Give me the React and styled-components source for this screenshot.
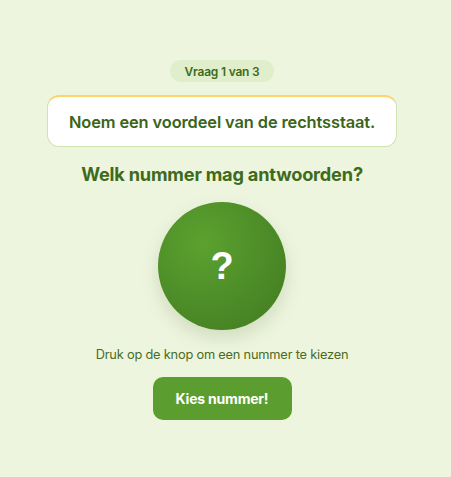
import { createGlobalStyle } from "styled-components";
import styled from "styled-components";

const GlobalStyle = createGlobalStyle`
  html, body {
    margin: 0;
    padding: 0;
    background: #eef5df;
  }

  body {
    font-family: Inter, "Open Sans", sans-serif;
  }
`;

const Page = styled.main`
  min-height: 477px;
  box-sizing: border-box;
  padding: 60px 54px 0 47px;
  display: flex;
  flex-direction: column;
  align-items: center;
`;

const Badge = styled.div`
  height: 22px;
  padding: 0 14px;
  border-radius: 11px;
  background: #e0eecb;
  color: #3f6a1e;
  font-size: 12px;
  font-weight: 600;
  letter-spacing: -0.2px;
  display: flex;
  align-items: center;
`;

const QuestionCard = styled.div`
  margin-top: 13px;
  width: 100%;
  height: 52px;
  box-sizing: border-box;
  background: #fff;
  border: 1px solid #cfe3b3;
  border-top: 2px solid #fcd46a;
  border-radius: 12px;
  display: flex;
  align-items: center;
  justify-content: center;
  color: #3a6418;
  font-size: 16.4px;
  font-weight: 600;
  letter-spacing: -0.1px;
`;

const Heading = styled.h2`
  margin: 16px 0 0;
  color: #3d6b1b;
  font-size: 18.2px;
  font-weight: 700;
  letter-spacing: -0.2px;
  line-height: 22px;
`;

const NumberBall = styled.div`
  margin-top: 17px;
  width: 128px;
  height: 128px;
  border-radius: 50%;
  background: radial-gradient(circle at 35% 32%, #5ba22f 0%, #4e8d28 50%, #417a20 100%);
  box-shadow: 0 8px 18px rgba(70, 110, 40, 0.18);
  display: flex;
  align-items: center;
  justify-content: center;
  color: #fff;
  font-family: "Liberation Sans", Arial, sans-serif;
  font-size: 38px;
  font-weight: 700;
`;

const Hint = styled.p`
  margin: 16px 0 0;
  color: #4a6b24;
  font-size: 12.8px;
  letter-spacing: -0.2px;
  line-height: 18px;
`;

const PickButton = styled.button`
  margin-top: 13px;
  width: 139px;
  height: 43px;
  border: none;
  border-radius: 10px;
  background: #5b9e2f;
  color: #fff;
  font-family: Inter, sans-serif;
  font-size: 14px;
  font-weight: 700;
  letter-spacing: -0.2px;
  cursor: pointer;
`;

export default function App() {
  return (
    <>
      <GlobalStyle />
      <Page>
        <Badge>Vraag 1 van 3</Badge>
        <QuestionCard>Noem een voordeel van de rechtsstaat.</QuestionCard>
        <Heading>Welk nummer mag antwoorden?</Heading>
        <NumberBall>?</NumberBall>
        <Hint>Druk op de knop om een nummer te kiezen</Hint>
        <PickButton>Kies nummer!</PickButton>
      </Page>
    </>
  );
}
